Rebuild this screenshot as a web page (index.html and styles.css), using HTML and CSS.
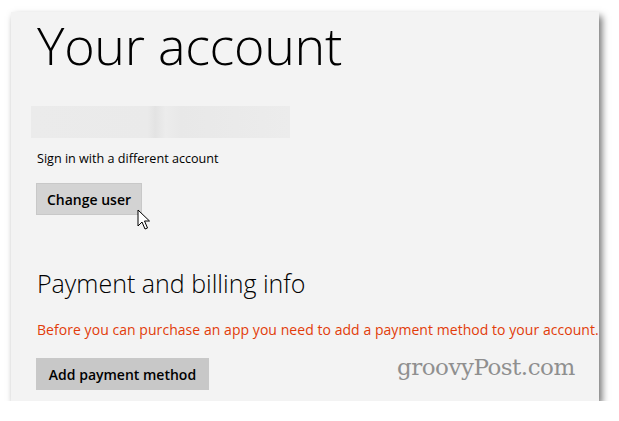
FILE: index.html
```html
<!DOCTYPE html>
<html lang="en">
<head>
  <meta charset="UTF-8">
  <title>Your account</title>
  <link rel="stylesheet" href="styles.css">
</head>
<body>
  <div class="panel">
    <h1>Your account</h1>
    <div class="blur-name"></div>
    <p class="hint">Sign in with a different account</p>
    <button class="btn btn-change">Change user</button>

    <h2>Payment and billing info</h2>
    <p class="warn">Before you can purchase an app you need to add a payment method to your account.</p>
    <button class="btn btn-add">Add payment method</button>

    <div class="watermark">groovyPost.com</div>
    <svg class="cursor" width="14" height="22" viewBox="0 0 14 22">
      <path d="M1 1 L1 17 L5 13 L8 20 L10.5 19 L7.5 12 L12.5 12 Z" fill="#fff" stroke="#000" stroke-width="1" stroke-linejoin="miter"/>
    </svg>
  </div>
</body>
</html>
```

FILE: styles.css
```css
body {
  margin: 0;
  background: #fff;
  font-family: 'Open Sans', 'Noto Sans', sans-serif;
  color: #000;
}
.panel {
  position: relative;
  margin: 12px 0 0 11px;
  width: 588px;
  height: 389px;
  background: #f3f3f3;
  box-shadow: 3px 4px 7px rgba(0, 0, 0, 0.55);
  padding: 1px 0 0 26px;
  box-sizing: border-box;
}
h1 {
  margin: -4px 0 0;
  font-size: 52px;
  font-weight: 300;
  line-height: 72px;
  letter-spacing: -0.3px;
}
.blur-name {
  margin: 25px 0 0 -6px;
  width: 259px;
  height: 32px;
  background: linear-gradient(to right, #ebebeb 0%, #eaeaea 45%, #e3e3e3 48%, #ececec 52%, #e8e8e8 58%, #ececec 100%);
}
.hint {
  margin: 12px 0 0;
  font-size: 12.6px;
  line-height: 18px;
}
.btn {
  display: block;
  font-family: 'Open Sans', 'Noto Sans', sans-serif;
  font-weight: 600;
  font-size: 14px;
  color: #000;
  border: 1px solid #c8c8c8;
  border-radius: 0;
  padding: 0 8px;
  height: 32px;
  margin-left: -1px;
}
.btn-change {
  margin-top: 15px;
  width: 106px;
  background: #d3d3d3;
}
h2 {
  margin: 51px 0 0;
  font-size: 25px;
  font-weight: 300;
  line-height: 34px;
}
.warn {
  margin: 20px 0 0;
  width: 562px;
  overflow: hidden;
  font-size: 14px;
  line-height: 20px;
  color: #e23c0a;
  white-space: nowrap;
  letter-spacing: 0.05px;
}
.btn-add {
  margin-top: 18px;
  width: 173px;
  background: #c8c8c8;
}
.watermark {
  position: absolute;
  left: 386px;
  top: 340px;
  font-family: 'DejaVu Serif', 'Liberation Serif', serif;
  font-size: 23px;
  line-height: 30px;
  color: #8f8f8f;
  letter-spacing: -0.5px;
}
.cursor {
  position: absolute;
  left: 126px;
  top: 197px;
}
```
